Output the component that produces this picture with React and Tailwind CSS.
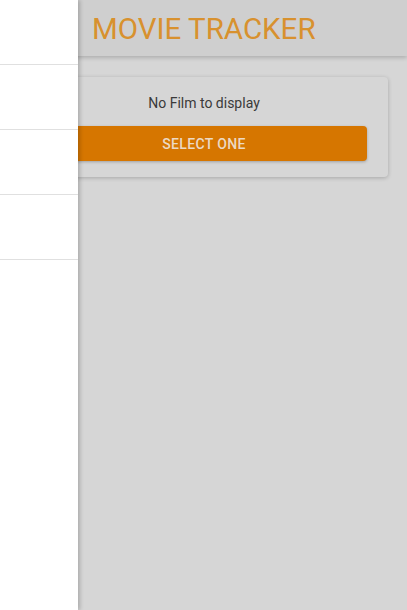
export default function App() {
  return (
    <div className="relative h-[610px] w-[407px] overflow-hidden bg-[#d6d6d6] font-['Roboto',sans-serif]">
      {/* Toolbar */}
      <header className="h-14 bg-[#cfcfcf] pl-[92px] pt-[3px] flex items-center shadow-[0_2px_4px_rgba(0,0,0,0.18)]">
        <h1 className="text-[29.5px] leading-none text-[#d8912e] font-normal">MOVIE TRACKER</h1>
      </header>

      {/* Content */}
      <main className="pt-[21px] pl-5 pr-[19px]">
        <div className="rounded bg-[#d6d6d6] px-[21px] pt-4 pb-4 shadow-[0_1px_4px_rgba(0,0,0,0.22)]">
          <p className="text-center text-sm leading-5 text-[#3a3a3a]">No Film to display</p>
          <button className="mt-[13px] h-[35px] w-full rounded bg-[#d67600] text-sm font-medium tracking-wide text-[#ecd9c4] shadow-[0_1px_3px_rgba(0,0,0,0.25)]">
            SELECT ONE
          </button>
        </div>
      </main>

      {/* Drawer */}
      <nav className="absolute left-0 top-0 h-full w-[78px] bg-white shadow-[2px_0_4px_rgba(0,0,0,0.2)]">
        <ul>
          <li className="h-[65px] border-b border-[#e0e0e0]"></li>
          <li className="h-[65px] border-b border-[#e0e0e0]"></li>
          <li className="h-[65px] border-b border-[#e0e0e0]"></li>
          <li className="h-[65px] border-b border-[#e0e0e0]"></li>
        </ul>
      </nav>
    </div>
  );
}
